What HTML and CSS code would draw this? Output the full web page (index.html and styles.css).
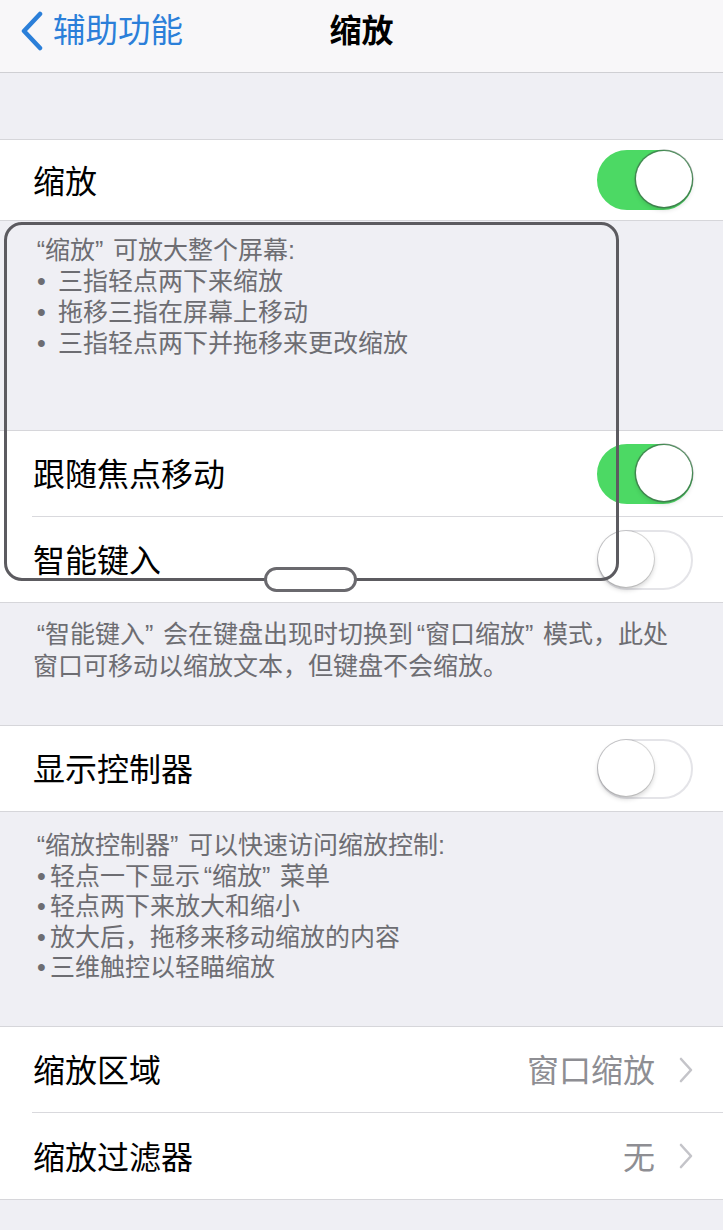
FILE: index.html
```html
<!DOCTYPE html>
<html lang="zh-CN">
<head>
<meta charset="utf-8">
<title>缩放</title>
<link rel="stylesheet" href="styles.css">
</head>
<body>
<div class="page">
  <header class="nav">
    <div class="back">
      <svg class="back-icon" width="26" height="40" viewBox="0 0 26 40"><path d="M21 3 L5 20 L21 37" fill="none" stroke="#2b7fd9" stroke-width="4.5" stroke-linecap="round" stroke-linejoin="round"/></svg>
      <span>辅助功能</span>
    </div>
    <div class="title">缩放</div>
  </header>

  <div class="gap-top"></div>

  <section class="group">
    <div class="row row-first">
      <span class="label">缩放</span>
      <span class="toggle on"><span class="knob"></span></span>
    </div>
  </section>

  <div class="footer footer1">
    <p><span class="ql">“</span>缩放<span class="qr">”</span>可放大整个屏幕:</p>
    <p class="bullet"><span class="dot">•</span>三指轻点两下来缩放</p>
    <p class="bullet"><span class="dot">•</span>拖移三指在屏幕上移动</p>
    <p class="bullet"><span class="dot">•</span>三指轻点两下并拖移来更改缩放</p>
  </div>

  <section class="group">
    <div class="row">
      <span class="label">跟随焦点移动</span>
      <span class="toggle on"><span class="knob"></span></span>
    </div>
    <div class="row">
      <span class="label">智能键入</span>
      <span class="toggle"><span class="knob"></span></span>
    </div>
  </section>

  <div class="footer footer2">
    <p><span class="ql">“</span>智能键入<span class="qr">”</span>会在键盘出现时切换到<span class="ql">“</span>窗口缩放<span class="qr">”</span>模式，此处</p>
    <p>窗口可移动以缩放文本，但键盘不会缩放。</p>
  </div>

  <section class="group">
    <div class="row">
      <span class="label">显示控制器</span>
      <span class="toggle"><span class="knob"></span></span>
    </div>
  </section>

  <div class="footer footer3">
    <p><span class="ql">“</span>缩放控制器<span class="qr">”</span>可以快速访问缩放控制:</p>
    <p class="bullet2"><span class="dot2">•</span>轻点一下显示<span class="ql">“</span>缩放<span class="qr">”</span>菜单</p>
    <p class="bullet2"><span class="dot2">•</span>轻点两下来放大和缩小</p>
    <p class="bullet2"><span class="dot2">•</span>放大后，拖移来移动缩放的内容</p>
    <p class="bullet2"><span class="dot2">•</span>三维触控以轻瞄缩放</p>
  </div>

  <section class="group">
    <div class="row">
      <span class="label">缩放区域</span>
      <span class="value">窗口缩放</span>
      <svg class="chev" width="14" height="26" viewBox="0 0 14 26"><path d="M2 2 L12 13 L2 24" fill="none" stroke="#c4c4c9" stroke-width="2.6" stroke-linecap="round" stroke-linejoin="round"/></svg>
    </div>
    <div class="row row-last">
      <span class="label">缩放过滤器</span>
      <span class="value">无</span>
      <svg class="chev" width="14" height="26" viewBox="0 0 14 26"><path d="M2 2 L12 13 L2 24" fill="none" stroke="#c4c4c9" stroke-width="2.6" stroke-linecap="round" stroke-linejoin="round"/></svg>
    </div>
  </section>

  <div class="gap-bottom"></div>

  <div class="zoom-window">
    <div class="handle"></div>
  </div>
</div>
</body>
</html>
```

FILE: styles.css
```css
html, body {
  margin: 0;
  padding: 0;
  background: #efeff4;
}
body {
  font-family: "Liberation Sans", "Noto Sans CJK SC", sans-serif;
  color: #000;
}
p { margin: 0; }

.page {
  position: relative;
  width: 723px;
  height: 1230px;
  overflow: hidden;
  background: #efeff4;
}

.nav {
  height: 72px;
  background: #f8f7f9;
  border-bottom: 1px solid #cfcfd3;
  display: flex;
  align-items: center;
  justify-content: center;
  position: relative;
}
.back {
  position: absolute;
  left: 19px;
  top: 11px;
  display: flex;
  align-items: center;
  gap: 8px;
  color: #2b7fd9;
  font-size: 32.5px;
  line-height: 40px;
}
.back-icon { display: block; }
.title {
  font-size: 32px;
  font-weight: 700;
  line-height: 40px;
  margin-top: -10px;
}

.gap-top {
  height: 66px;
}

.group {
  background: #fff;
  border-top: 1px solid #d6d6da;
  border-bottom: 1px solid #d6d6da;
}
.row {
  height: 85px;
  display: flex;
  align-items: center;
  padding-left: 33px;
  padding-right: 30px;
  position: relative;
}
.row + .row {
  border-top: 1px solid #d9d9dd;
  margin-left: 32px;
  padding-left: 1px;
}
.row-first { height: 80px; }
.row-last { height: 86px; }

.label {
  font-size: 32px;
  flex: 1;
  line-height: 40px;
  margin-top: 3px;
}
.value {
  font-size: 32px;
  color: #8e8e93;
  line-height: 40px;
  margin-right: 24px;
  margin-top: 3px;
}
.chev { display: block; }

.toggle {
  width: 96px;
  height: 60px;
  border-radius: 30px;
  box-sizing: border-box;
  background: #fff;
  border: 2px solid #e4e4e8;
  position: relative;
}
.toggle .knob {
  position: absolute;
  top: -1px;
  left: -1px;
  width: 56px;
  height: 56px;
  border-radius: 50%;
  background: #fff;
  box-shadow: 0 0 0 1px rgba(0,0,0,0.14), 0 3px 5px rgba(0,0,0,0.18);
}
.toggle.on {
  background: #4cd964;
  border-color: #4cd964;
}
.toggle.on .knob {
  left: auto;
  right: -1px;
  box-shadow: 0 0 0 1.5px rgba(60,90,70,0.6), 0 3px 5px rgba(0,0,0,0.15);
}

.footer {
  color: #6d6d72;
  font-size: 25px;
  padding-left: 33px;
  box-sizing: border-box;
}
.footer1 {
  height: 209px;
  padding-top: 14px;
  line-height: 31px;
}
.footer2 {
  height: 122px;
  padding-top: 15px;
  line-height: 32px;
}
.footer3 {
  height: 214px;
  padding-top: 18px;
  line-height: 30.5px;
}
.ql, .qr {
  display: inline-block;
}
.ql {
  width: 12px;
  text-align: right;
}
.qr {
  width: 18px;
  text-align: left;
}
.dot, .dot2 {
  font-family: "Liberation Sans", sans-serif;
  display: inline-block;
}
.bullet .dot {
  width: 21px;
  margin-left: 4px;
}
.bullet2 .dot2 {
  width: 13px;
  margin-left: 4px;
}

.gap-bottom {
  height: 40px;
}

.zoom-window {
  position: absolute;
  left: 4px;
  top: 222px;
  width: 615px;
  height: 359px;
  box-sizing: border-box;
  border: 3px solid #5c5b60;
  border-radius: 18px;
}
.handle {
  position: absolute;
  left: 257px;
  bottom: -14px;
  width: 93px;
  height: 25px;
  box-sizing: border-box;
  border: 3px solid #6a696e;
  border-radius: 13px;
  background: #fff;
}
```
